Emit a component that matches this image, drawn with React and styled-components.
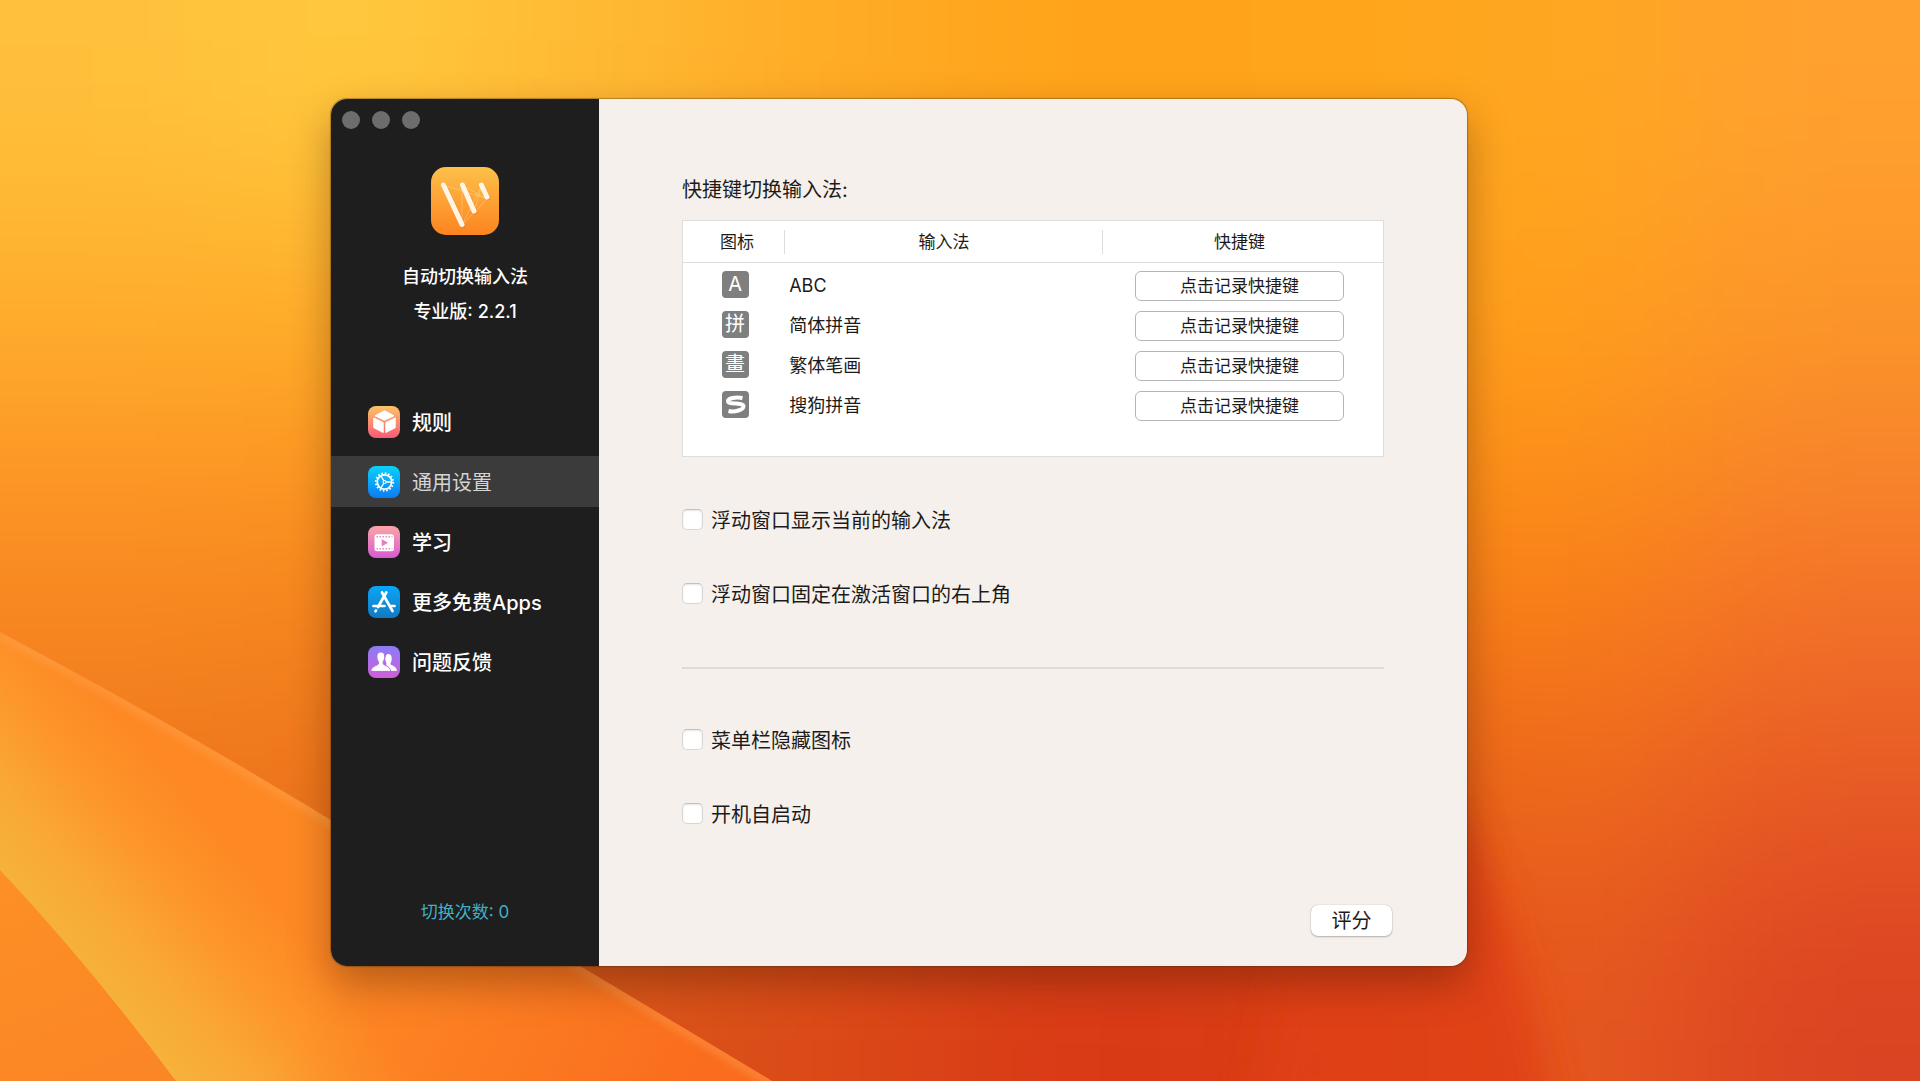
import React from "react";
import styled, { createGlobalStyle } from "styled-components";

const GlobalStyle = createGlobalStyle`
  *, *::before, *::after { box-sizing: border-box; }
  body {
    margin: 0;
    font-family: Inter, "Noto Sans CJK SC", sans-serif;
    color: #1d1b1a;
  }
  button, input { font: inherit; color: inherit; }
`;

/* ---------- Desktop ---------- */

const Desktop = styled.div`
  position: relative;
  min-height: 100vh;
  display: grid;
  grid-template-columns: 331fr 1136fr 453fr;
  align-items: start;
  padding: 99px 0 40px;
  background: #f98a20;
  overflow: hidden;
`;

const WallpaperSvg = styled.svg`
  position: absolute;
  inset: 0;
  width: 100%;
  height: 100%;
`;

const meshColors = [
  ["#ffc03b", "#ffc93e", "#ffb934", "#ffab25", "#ffa319", "#ffa51b", "#ffa721", "#ffa12f"],
  ["#ffac2b", "#ffac28", "#ffa321", "#ff9f20", "#ff9c1c", "#ff9e1a", "#ff9f1c", "#fb952a"],
  ["#fb8d23", "#f88c1f", "#f08018", "#f08018", "#f58018", "#fb8616", "#fb8717", "#f67b2a"],
  ["#f07a1d", "#ee761b", "#e66c1a", "#de5c18", "#dc5016", "#e56014", "#f06d1b", "#e95d25"],
  ["#e4681a", "#e2681a", "#d9561a", "#db4817", "#d83916", "#da3d15", "#e65a1f", "#db4422"],
];

const cellEdges = (count, size, index) => {
  const start = index === 0 ? -400 : index * size;
  const end = index === count - 1 ? count * size + 400 : (index + 1) * size;
  return [start, end - start];
};

function Wallpaper() {
  return (
    <WallpaperSvg viewBox="0 0 1920 1081" preserveAspectRatio="xMidYMid slice" aria-hidden="true">
      <defs>
        <filter id="mesh" filterUnits="userSpaceOnUse" x="-400" y="-400" width="2720" height="1881" colorInterpolationFilters="sRGB">
          <feGaussianBlur stdDeviation="95" />
        </filter>
        <filter id="soft" filterUnits="userSpaceOnUse" x="1000" y="600" width="920" height="700">
          <feGaussianBlur stdDeviation="18" />
        </filter>
        <filter id="edge" filterUnits="userSpaceOnUse" x="-50" y="550" width="1000" height="600">
          <feGaussianBlur stdDeviation="4" />
        </filter>
        <linearGradient id="dune" gradientUnits="userSpaceOnUse" x1="88" y1="975" x2="232" y2="855">
          <stop offset="0" stopColor="#f6b23b" />
          <stop offset="0.3" stopColor="#f9a836" />
          <stop offset="0.650" stopColor="#fd962b" />
          <stop offset="1" stopColor="#fe8924" />
        </linearGradient>
        <linearGradient id="duneRight" gradientUnits="userSpaceOnUse" x1="360" y1="900" x2="700" y2="1060">
          <stop offset="0" stopColor="#fa6d1e" stopOpacity="0" />
          <stop offset="1" stopColor="#fa6d1e" />
        </linearGradient>
        <linearGradient id="duneFoot" gradientUnits="userSpaceOnUse" x1="0" y1="870" x2="80" y2="1081">
          <stop offset="0" stopColor="#fd9026" />
          <stop offset="1" stopColor="#fb8625" />
        </linearGradient>
        <clipPath id="duneClip">
          <path d="M0 632 Q170 722 331 820 L580 966 L772 1081 H0Z" />
        </clipPath>
      </defs>
      <g filter="url(#mesh)">
        {meshColors.map((row, r) =>
          row.map((fill, c) => {
            const [x, width] = cellEdges(8, 240, c);
            const [y, height] = cellEdges(5, 216, r);
            return <rect key={`${r}-${c}`} x={x} y={y} width={width + 1} height={height + 1} fill={fill} />;
          })
        )}
      </g>
      <path d="M1330 780 H1440 Q1500 860 1555 1120 H1250Z" fill="#e03f14" opacity="0.85" filter="url(#soft)" />
      <g clipPath="url(#duneClip)">
        <rect y="600" width="800" height="481" fill="url(#dune)" />
        <rect y="600" width="800" height="481" fill="url(#duneRight)" />
        <path d="M0 634 Q170 724 331 822 L580 968 L772 1083" fill="none" stroke="#ffb066" strokeWidth="7" opacity="0.45" filter="url(#edge)" />
      </g>
      <path d="M0 870 Q85 960 176 1081 H0Z" fill="url(#duneFoot)" />
    </WallpaperSvg>
  );
}

/* ---------- Window ---------- */

const Window = styled.div`
  position: relative;
  grid-column: 2;
  display: flex;
  min-height: 867px;
  border-radius: 16px;
  overflow: hidden;
  background: #f5f0ec;
  box-shadow: 0 0 1px 1px rgba(70, 40, 10, 0.35), 0 18px 40px rgba(60, 20, 0, 0.36);
`;

const Sidebar = styled.aside`
  flex: 0 0 268px;
  display: flex;
  flex-direction: column;
  padding: 12px 0 42px;
  background: #1e1e1e;
  color: #fff;
`;

const TrafficLights = styled.div`
  display: flex;
  gap: 12px;
  padding-left: 11px;
`;

const Light = styled.button`
  width: 18px;
  height: 18px;
  padding: 0;
  border: 0;
  border-radius: 50%;
  background: #6d6d6d;
`;

const Brand = styled.div`
  display: flex;
  flex-direction: column;
  align-items: center;
  padding: 38px 0 67px;
  font-size: 18px;
  line-height: 35px;
  font-weight: 500;

  svg { display: block; margin-bottom: 24px; }
`;

const BrandLine = styled.div``;

const Nav = styled.nav`
  display: flex;
  flex-direction: column;
  gap: 9px;
`;

const NavLink = styled.a`
  display: flex;
  align-items: center;
  gap: 12px;
  height: 51px;
  padding-left: 37px;
  background: ${(p) => (p.$active ? "#3b3b3b" : "transparent")};
  color: ${(p) => (p.$active ? "#d4d4d4" : "#fff")};
  font-size: 20px;
  line-height: 28px;
  font-weight: ${(p) => (p.$active ? 400 : 500)};
  text-decoration: none;
`;

const ItemText = styled.span`
  padding-top: 3px;
`;

const Counter = styled.div`
  margin-top: auto;
  font-size: 17px;
  line-height: 24px;
  text-align: center;
  color: #42b0c2;
`;

/* ---------- Main pane ---------- */

const Main = styled.main`
  flex: 1;
  min-width: 0;
  display: flex;
  flex-direction: column;
  padding: 77px 75px 30px;
`;

const Content = styled.div`
  padding: 0 8px;
`;

const Heading = styled.h2`
  margin: 0 0 16px;
  font-size: 20px;
  line-height: 28px;
  font-weight: 400;
`;

const TableBox = styled.div`
  min-height: 237px;
  border: 1px solid #dfdcd9;
  background: #fff;
`;

const Table = styled.table`
  width: 100%;
  table-layout: fixed;
  border-collapse: separate;
  border-spacing: 0;
`;

const Col = styled.col`
  width: ${(p) => p.$width};
`;

const thPadding = { icon: "0 0 0 6px", name: "0", key: "0 7px 0 0" };
const tdPadding = { icon: "3px 0 0 2px", name: "5px 0 0 4px", key: "5px 7px 0 0" };

const Th = styled.th`
  height: 42px;
  padding: ${(p) => thPadding[p.$kind]};
  border-bottom: 1px solid #dcdcdc;
  background: ${(p) =>
    p.$kind === "key" ? "none" : "linear-gradient(#dcdcdc, #dcdcdc) right center / 1px 24px no-repeat"};
  font-size: 17px;
  line-height: 24px;
  font-weight: 400;
`;

const Td = styled.td`
  height: 40px;
  padding: ${(p) => tdPadding[p.$kind]};
  font-size: 18px;
  line-height: 26px;
  vertical-align: middle;
`;

const Badge = styled.span`
  display: flex;
  align-items: center;
  justify-content: center;
  width: 27px;
  height: 27px;
  margin: 0 auto;
  border-radius: 4px;
  background: #7f7f7f;
  color: #fff;
  font-size: 20px;
  line-height: 27px;
`;

const RecordButton = styled.button`
  display: block;
  width: 209px;
  max-width: 100%;
  height: 30px;
  margin: 0 auto;
  padding: 0;
  border: 1px solid #b4b4b4;
  border-radius: 6px;
  background: #fff;
  font-size: 17px;
  line-height: 24px;
`;

const OptionGroup = styled.div`
  display: flex;
  flex-direction: column;
  align-items: flex-start;
  gap: 46px;
  padding: ${(p) => (p.$second ? "56px 0 0" : "48px 0 60px")};
`;

const OptionLabel = styled.label`
  display: flex;
  align-items: center;
  gap: 8px;
  height: 28px;
  font-size: 20px;
  line-height: 28px;
`;

const Checkbox = styled.input`
  appearance: none;
  width: 21px;
  height: 21px;
  margin: 0;
  border: 1px solid #d9d5d2;
  border-top-color: #c4c0bd;
  border-radius: 5px;
  background: #fff;
  box-shadow: inset 0 1px 2px rgba(0, 0, 0, 0.1);

  &:checked { background: #0a7aff; }
`;

const Divider = styled.hr`
  height: 2px;
  margin: 0;
  border: 0;
  background: #dedad6;
`;

const Footer = styled.footer`
  display: flex;
  justify-content: flex-end;
  margin-top: auto;
`;

const RateButton = styled.button`
  width: 81px;
  height: 31px;
  padding: 0;
  border: 0;
  border-radius: 7px;
  background: #fff;
  box-shadow: 0 0 1px rgba(0, 0, 0, 0.3), 0 1px 2px rgba(0, 0, 0, 0.25);
  font-size: 20px;
  line-height: 28px;
`;

/* ---------- Drawings ---------- */

function AppLogo() {
  return (
    <svg width="68" height="68" viewBox="0 0 68 68" aria-hidden="true">
      <defs>
        <linearGradient id="logoBg" x1="0" y1="0" x2="0" y2="1">
          <stop offset="0" stopColor="#fdc04a" />
          <stop offset="1" stopColor="#fd8420" />
        </linearGradient>
      </defs>
      <rect width="68" height="68" rx="15" fill="url(#logoBg)" />
      <g stroke="#ffe3b0" strokeWidth="0.5" opacity="0.8" fill="none">
        <path d="M12.500 18 L54 31 M31 18 L31 58 L57 31 M31 58 L51 18 M31 18 L54 31 M43 45 L51 18" />
      </g>
      <g strokeLinecap="round" fill="none">
        <path d="M13.500 19 L32 58.500 M32.500 19 L44 45 M51.500 19 L57 31" stroke="#d9700f" strokeWidth="5" opacity="0.35" />
        <path d="M12.500 18 L31 57.500 M31.500 18 L43 44 M50.500 18 L56 30" stroke="#fff6e6" strokeWidth="5" />
      </g>
    </svg>
  );
}

function Tile({ id, from, to, children }) {
  return (
    <svg width="32" height="32" viewBox="0 0 32 32" aria-hidden="true">
      <defs>
        <linearGradient id={id} x1="0" y1="0" x2="0" y2="1">
          <stop offset="0" stopColor={from} />
          <stop offset="1" stopColor={to} />
        </linearGradient>
      </defs>
      <rect width="32" height="32" rx="8" fill={`url(#${id})`} />
      {children}
    </svg>
  );
}

const CubeIcon = () => (
  <Tile id="tileCube" from="#fbc466" to="#fb5a76">
    <g fill="#fff" stroke="#fff" strokeWidth="1" strokeLinejoin="round">
      <path d="M16.500 4.800 L26 9.700 L16.500 14.300 L7 9.700Z" />
      <path d="M5.800 12 L15.200 16.600 V26.500 L5.800 21.700Z" />
      <path d="M27.200 12 L17.800 16.600 V26.500 L27.200 21.700Z" />
    </g>
  </Tile>
);

const GearIcon = () => (
  <Tile id="tileGear" from="#0ad2fb" to="#0b7bf6">
    <g fill="none" stroke="#fff" transform="translate(16.500 16)">
      <circle r="7.200" strokeWidth="1.700" />
      <circle r="8.700" strokeWidth="2" strokeDasharray="1.600 1.816" />
      <circle r="2" fill="#fff" stroke="none" />
      <path d="M0 0 L7 0 M0 0 L-3.500 -6 M0 0 L-3.500 6" strokeWidth="1.400" />
      <circle r="0.900" fill="#0ba0f8" stroke="none" />
    </g>
  </Tile>
);

const FilmIcon = () => (
  <Tile id="tileFilm" from="#fba5a8" to="#d75bd2">
    <rect x="6.500" y="8.300" width="19.500" height="17" rx="2.500" fill="#fff" />
    <g stroke="#e78cc0" strokeWidth="1.500" strokeDasharray="1.500 1.500">
      <path d="M8.500 10.800 H24.500" />
      <path d="M8.500 22.800 H24.500" />
    </g>
    <path d="M13.700 13 L20 16.700 L13.700 20.400Z" fill="#e57fc2" />
  </Tile>
);

const StoreIcon = () => (
  <Tile id="tileStore" from="#0aa6f6" to="#1279c4">
    <g fill="none" stroke="#fff" strokeWidth="2.700" strokeLinecap="round">
      <path d="M18.300 6.500 L10 21" />
      <path d="M14 6.500 L24.500 25" />
      <path d="M8 24.500 L7.500 25.200" />
      <path d="M5.500 20 H16.500" />
      <path d="M22.500 20 H26.500" />
    </g>
  </Tile>
);

const PeopleIcon = () => (
  <Tile id="tilePeople" from="#8b7cf8" to="#d05ed8">
    <g fill="#fff">
      <ellipse cx="20.500" cy="12.800" rx="3.200" ry="4.700" />
      <path d="M18.500 15 H22.500 V18.500 Q28.800 20.500 29 25 H18Z" />
      <g stroke="#b46de8" strokeWidth="1">
        <path d="M12.800 6 C15.300 6 16.900 7.800 16.700 10.800 C16.600 13 16 14.500 15.200 15.500 V18 C16 19.600 22.500 20 22.800 25.500 H2.800 C3 20 9.600 19.600 10.400 18 V15.500 C9.600 14.500 9 13 8.900 10.800 C8.700 7.800 10.300 6 12.800 6Z" />
      </g>
      <rect x="2" y="24.900" width="27" height="1.300" fill="#c664df" />
    </g>
  </Tile>
);

const SogouMark = () => (
  <svg width="27" height="27" viewBox="0 0 27 27" aria-hidden="true">
    <path
      d="M20.500 7 C14 5.600 5.800 7.200 6 10.200 C6.400 14 20.800 11 21.500 15 C21.800 19 12.500 21.400 6.500 20"
      fill="none"
      stroke="#fff"
      strokeWidth="4"
    />
  </svg>
);

/* ---------- Data ---------- */

const navItems = [
  { label: "规则", Icon: CubeIcon },
  { label: "通用设置", Icon: GearIcon, active: true },
  { label: "学习", Icon: FilmIcon },
  { label: "更多免费Apps", Icon: StoreIcon },
  { label: "问题反馈", Icon: PeopleIcon },
];

const inputMethods = [
  { badge: "A", name: "ABC" },
  { badge: "拼", name: "简体拼音" },
  { badge: "畫", name: "繁体笔画" },
  { badge: <SogouMark />, name: "搜狗拼音" },
];

const Option = ({ id, children }) => (
  <OptionLabel htmlFor={id}>
    <Checkbox type="checkbox" id={id} />
    <ItemText>{children}</ItemText>
  </OptionLabel>
);

export default function App() {
  return (
    <>
      <GlobalStyle />
      <Desktop>
        <Wallpaper />
        <Window>
          <Sidebar>
            <TrafficLights>
              <Light type="button" aria-label="关闭" />
              <Light type="button" aria-label="最小化" />
              <Light type="button" aria-label="缩放" />
            </TrafficLights>
            <Brand>
              <AppLogo />
              <BrandLine>自动切换输入法</BrandLine>
              <BrandLine>专业版: 2.2.1</BrandLine>
            </Brand>
            <Nav>
              {navItems.map(({ label, Icon, active }) => (
                <NavLink key={label} href="#" $active={active} aria-current={active ? "page" : undefined}>
                  <Icon />
                  <ItemText>{label}</ItemText>
                </NavLink>
              ))}
            </Nav>
            <Counter>切换次数: 0</Counter>
          </Sidebar>
          <Main>
            <Content>
              <Heading id="shortcuts">快捷键切换输入法:</Heading>
              <TableBox>
                <Table aria-labelledby="shortcuts">
                  <colgroup>
                    <Col $width="14.600%" />
                    <Col />
                    <Col $width="40%" />
                  </colgroup>
                  <thead>
                    <tr>
                      <Th scope="col" $kind="icon">图标</Th>
                      <Th scope="col" $kind="name">输入法</Th>
                      <Th scope="col" $kind="key">快捷键</Th>
                    </tr>
                  </thead>
                  <tbody>
                    {inputMethods.map(({ badge, name }) => (
                      <tr key={name}>
                        <Td $kind="icon"><Badge>{badge}</Badge></Td>
                        <Td $kind="name">{name}</Td>
                        <Td $kind="key">
                          <RecordButton type="button">点击记录快捷键</RecordButton>
                        </Td>
                      </tr>
                    ))}
                  </tbody>
                </Table>
              </TableBox>
              <OptionGroup>
                <Option id="show-float">浮动窗口显示当前的输入法</Option>
                <Option id="pin-float">浮动窗口固定在激活窗口的右上角</Option>
              </OptionGroup>
              <Divider />
              <OptionGroup $second>
                <Option id="hide-menubar">菜单栏隐藏图标</Option>
                <Option id="launch-login">开机自启动</Option>
              </OptionGroup>
            </Content>
            <Footer>
              <RateButton type="button">评分</RateButton>
            </Footer>
          </Main>
        </Window>
      </Desktop>
    </>
  );
}
